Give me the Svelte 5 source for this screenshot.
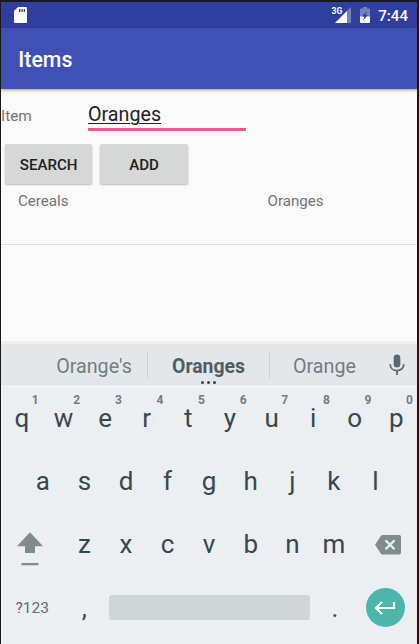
<script>
  const top = 'qwertyuiop'.split('');
  const middle = 'asdfghjkl'.split('');
  const lower = 'zxcvbnm'.split('');
  let item = $state('Oranges');
</script>

<div class="frame">
  <div class="device">
    <div class="status">
      <svg class="sd" width="13" height="16" viewBox="0 0 13 16"><path fill="#fff" d="M4 0h8q1 0 1 1v14q0 1-1 1H1q-1 0-1-1V4z"/><path fill="#303f9f" d="M5 2h1.400v3H5zM7.400 2h1.300v3H7.400zM9.700 2H11v3H9.700z"/></svg>
      <span class="net">3G</span>
      <svg class="signal" width="16" height="16" viewBox="0 0 16 16"><path fill="#7780c1" d="M16 0v16H0z"/><path fill="#fff" d="M12 4v12H0z"/></svg>
      <svg class="battery" width="10" height="16" viewBox="0 0 10 16"><path fill="#7780c1" d="M3 0h4v1.500h2q1 0 1 1V10H0V2.500q0-1 1-1h2z"/><path fill="#fff" d="M0 9.500h10V15q0 1-1 1H1q-1 0-1-1z"/><path fill="#303f9f" d="M7 4 2 9.500h2.500L3 13.500 8 8H5.500z"/></svg>
      <span class="clock">7:44</span>
    </div>
    <header>Items</header>
    <main>
      <div class="field">
        <label for="item">Item</label>
        <div class="entry"><input id="item" bind:value={item} spellcheck="false" /></div>
      </div>
      <div class="actions"><button>SEARCH</button><button>ADD</button></div>
      <div class="result"><span>Cereals</span><span>Oranges</span></div>
    </main>
    <div class="suggestions">
      <div class="word first">Orange's</div>
      <div class="word chosen">Oranges<i></i></div>
      <div class="word last">Orange</div>
      <svg class="mic" width="16" height="22" viewBox="0 0 16 22"><rect x="4.700" y="0.500" width="6.600" height="13" rx="3.300" fill="#59676e"/><path d="M1.200 10.200c0 8.600 13.600 8.600 13.600 0M8 16.500V21" fill="none" stroke="#59676e" stroke-width="1.800"/></svg>
    </div>
    <div class="keyboard">
      <div class="row">
        {#each top as key, i}
          <div class="key">{key}<sup>{(i + 1) % 10}</sup></div>
        {/each}
      </div>
      <div class="row middle">
        {#each middle as key}<div class="key">{key}</div>{/each}
      </div>
      <div class="row">
        <div class="wide shift"><svg width="26" height="34" viewBox="0 0 26 34"><path fill="#808b8f" d="M13 .3 26 14.300h-8V21H8v-6.700H0zM4.500 31h17v2.300h-17z"/></svg></div>
        {#each lower as key}<div class="key">{key}</div>{/each}
        <div class="wide delete"><svg width="26" height="20" viewBox="0 0 26 20"><path fill="#808b8f" d="M7.500 0H24q2 0 2 2v15.500q0 2-2 2H7.500q-1 0-1.700-1L0 9.800 5.800 1q.7-1 1.700-1z"/><path d="m10.500 5.200 9 9m0-9-9 9" stroke="#ebeff2" stroke-width="2.300"/></svg></div>
      </div>
      <div class="row">
        <div class="wide symbols">?123</div>
        <div class="key">,</div>
        <div class="space"></div>
        <div class="key period">.</div>
        <div class="wide enter"><div class="disc"><svg width="22" height="14" viewBox="0 0 22 14"><path d="M20 1v6H2M8 1 2 7l6 6" fill="none" stroke="#fff" stroke-width="2.200"/></svg></div></div>
      </div>
    </div>
  </div>
</div>

<style>
  .frame { box-sizing: border-box; width: 419px; height: 644px; padding: 2px 2px 0 1px; background: #1b191c; font-family: Roboto, "Noto Sans", sans-serif; overflow: hidden; }
  .device { display: flex; flex-direction: column; height: 642px; background: #fafafa; }
  .status { display: flex; box-sizing: border-box; height: 26px; padding: 5px 9px 0 13px; background: #303f9f; color: #fff; }
  .net { margin-left: auto; font-size: 8.500px; line-height: 9px; font-weight: 700; }
  .signal { margin-left: -7px; }
  .battery { margin-left: 9px; }
  .clock { margin-left: 8px; font-size: 15.100px; line-height: 19px; font-weight: 500; }
  header { position: relative; box-sizing: border-box; height: 61px; padding-left: 17.300px; background: #3f51b5; color: #fff; font-size: 21.300px; line-height: 63px; font-weight: 500; box-shadow: 0 1px 3px #0006; }
  main { height: 252px; }
  .field { display: flex; height: 55px; color: #757575; font-size: 15.300px; }
  label { width: 87px; line-height: 54px; }
  .entry { box-sizing: border-box; width: 158px; height: 42px; padding-top: 12px; border-bottom: 3px solid #fc5590; }
  input { display: block; width: 100%; height: 27px; padding: 0; border: 0; outline: 0; background: transparent; color: #212121; font: 19.700px/27px Roboto, sans-serif; text-decoration: underline; text-decoration-thickness: 1px; text-underline-offset: 2px; }
  .actions { display: flex; gap: 8px; padding-left: 4px; height: 40px; }
  button { width: 87.400px; height: 40px; padding: 1px 0 0; border: 0; border-radius: 2px; background: #d6d7d7; box-shadow: 0 1px 2px #0004; color: #212121; font: 500 15.100px/40px Roboto, sans-serif; }
  .result { box-sizing: border-box; display: flex; height: 61px; padding-left: 17px; border-bottom: 1px solid #dedede; color: #757575; font-size: 15.100px; line-height: 34px; }
  .result span { flex: 0 0 249.500px; }
  .result span:last-child { flex: 1; }
  .suggestions { position: relative; display: flex; align-items: center; box-sizing: border-box; height: 46px; background: #e3e7ea; border-top: 3px solid #efefef; border-bottom: 1px solid #f6f8f9; color: #727d82; font-size: 20px; line-height: 40px; }
  .word { position: relative; box-sizing: border-box; height: 26px; line-height: 30px; text-align: center; }
  .first { width: 147px; padding-left: 40px; border-right: 1px solid #cbd0d3; font-size: 19.700px; }
  .chosen { width: 122px; border-right: 1px solid #cbd0d3; color: #4f5d63; font-size: 19.400px; font-weight: 700; }
  .chosen i { position: absolute; left: 53px; top: 29px; width: 3px; height: 3px; border-radius: 50%; background: #37474f; box-shadow: 6px 0 #37474f, 12px 0 #37474f; }
  .last { width: 109px; font-size: 19.700px; }
  .mic { margin-left: 10px; }
  .keyboard { flex: 1; background: #ebeff2; color: #37474f; }
  .row { display: flex; align-items: center; height: 63.200px; }
  .middle { padding-left: 20.800px; }
  .key { position: relative; left: 0.200px; width: 41.600px; text-align: center; font-size: 26px; line-height: 63px; }
  sup { position: absolute; left: 29px; top: 6px; width: 10px; color: #727d82; font-size: 12px; line-height: 14px; font-weight: 700; text-align: center; }
  .wide { width: 62.400px; display: flex; align-items: center; }
  .wide svg { display: block; }
  .shift { padding-top: 8px; box-sizing: border-box; padding-left: 16px; }
  .delete { box-sizing: border-box; justify-content: center; padding-left: 4px; }
  .symbols { justify-content: center; color: #606d73; font-size: 15.500px; }
  .space { width: 201px; height: 25px; margin-left: 4px; margin-top: -1px; border-radius: 3px; background: #d0d5d8; }
  .period { margin-left: 4px; }
  .enter { flex: 1; justify-content: center; padding-right: 2px; }
  .disc { display: flex; align-items: center; justify-content: center; width: 39px; height: 39px; margin-top: -1px; border-radius: 50%; background: #4db6ac; }
</style>
